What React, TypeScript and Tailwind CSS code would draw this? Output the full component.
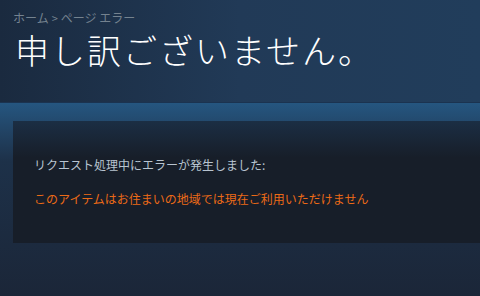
import React from 'react';

const jp = { fontFamily: '"Noto Sans CJK JP", "Noto Sans", sans-serif' };

const App: React.FC = () => {
    return (
        <div className="w-[480px] h-[296px] overflow-hidden bg-[#1b2638]" style={jp}>
            {/* header */}
            <div className="h-[103px] bg-gradient-to-r from-[#1a2a3f] via-[#213a57] to-[#213d5b] pl-[13px] pt-[10px] border-b border-[#1b3350]">
                <div className="flex items-center text-[12px] leading-[16px] text-[#74828f]">
                    <span>ホーム</span>
                    <span className="mx-[3px] text-[11px]">&gt;</span>
                    <span>ページ エラー</span>
                </div>
                <h1 className="mt-[4px] ml-[2px] text-[34px] leading-[40px] font-light text-white tracking-[2px]">
                    申し訳ございません。
                </h1>
            </div>

            {/* content */}
            <div className="h-[193px] bg-gradient-to-b from-[#255680] via-[#1d3149] via-30% to-[#1b2638] pt-[18px] pl-[13px]">
                <div className="h-[122px] bg-gradient-to-b from-[#1b2e44] via-[#171e29] via-30% to-[#171e29] pl-[21px] pt-[36px]">
                    <p className="text-[12px] leading-[16px] text-[#b8c4d0]">
                        リクエスト処理中にエラーが発生しました:
                    </p>
                    <p className="mt-[18px] text-[12px] leading-[16px] text-[#ec6a17]">
                        このアイテムはお住まいの地域では現在ご利用いただけません
                    </p>
                </div>
            </div>
        </div>
    );
};

export default App;
